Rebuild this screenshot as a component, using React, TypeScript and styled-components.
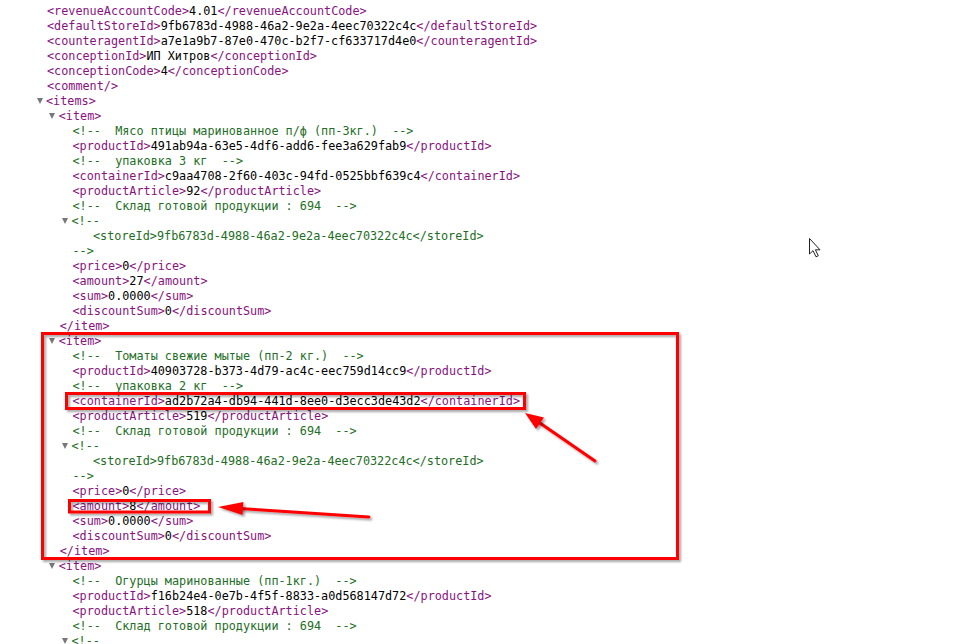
import React from "react";
import styled, { createGlobalStyle } from "styled-components";

const Global = createGlobalStyle`
  html, body { margin: 0; padding: 0; background: #fff; }
  body { width: 956px; height: 644px; overflow: hidden; }
`;

const INDENT = 12.75;

const Page = styled.div`
  position: relative;
  width: 956px;
  height: 644px;
  overflow: hidden;
  box-sizing: border-box;
  padding: 3.5px 0 0 47px;
  font-family: "DejaVu Sans Mono", "Liberation Mono", monospace;
  font-size: 11.8px;
  color: #000;
`;

const Line = styled.div`
  height: 15px;
  line-height: 15px;
  white-space: pre;
`;

const Children = styled.div`
  margin-left: ${INDENT}px;
`;

const CommentBody = styled.div`
  margin-left: 20.5px;
`;

const Tag = styled.span`
  color: #881280;
`;

const Comment = styled.span`
  color: #236e25;
`;

const Fold = styled.span`
  display: inline-block;
  width: 0;
  height: 0;
  margin-left: -10.5px;
  margin-right: 3.5px;
  border-left: 3.5px solid transparent;
  border-right: 3.5px solid transparent;
  border-top: 6px solid #777;
  vertical-align: 1px;
`;

const Overlay = styled.svg`
  position: absolute;
  left: 0;
  top: 0;
  pointer-events: none;
`;

type XNode =
  | { kind: "leaf"; tag: string; text: string }
  | { kind: "empty"; tag: string }
  | { kind: "comment"; text: string }
  | { kind: "mcomment"; lines: string[] }
  | { kind: "el"; tag: string; children: XNode[] };

const leaf = (tag: string, text: string): XNode => ({ kind: "leaf", tag, text });
const cm = (text: string): XNode => ({ kind: "comment", text });
const store = (id: string): XNode => ({
  kind: "mcomment",
  lines: [`<storeId>${id}</storeId>`],
});

const STORE = "9fb6783d-4988-46a2-9e2a-4eec70322c4c";

const item = (
  name: string,
  productId: string,
  pack: string | null,
  containerId: string | null,
  article: string,
  amount: string
): XNode => {
  const ch: XNode[] = [cm(`  ${name}  `), leaf("productId", productId)];
  if (pack) ch.push(cm(`  ${pack}  `));
  if (containerId) ch.push(leaf("containerId", containerId));
  ch.push(leaf("productArticle", article));
  ch.push(cm("  Склад готовой продукции : 694  "));
  ch.push(store(STORE));
  ch.push(leaf("price", "0"));
  ch.push(leaf("amount", amount));
  ch.push(leaf("sum", "0.0000"));
  ch.push(leaf("discountSum", "0"));
  return { kind: "el", tag: "item", children: ch };
};

const tree: XNode[] = [
  leaf("revenueAccountCode", "4.01"),
  leaf("defaultStoreId", STORE),
  leaf("counteragentId", "a7e1a9b7-87e0-470c-b2f7-cf633717d4e0"),
  leaf("conceptionId", "ИП Хитров"),
  leaf("conceptionCode", "4"),
  { kind: "empty", tag: "comment" },
  {
    kind: "el",
    tag: "items",
    children: [
      item(
        "Мясо птицы маринованное п/ф (пп-3кг.)",
        "491ab94a-63e5-4df6-add6-fee3a629fab9",
        "упаковка 3 кг",
        "c9aa4708-2f60-403c-94fd-0525bbf639c4",
        "92",
        "27"
      ),
      item(
        "Томаты свежие мытые (пп-2 кг.)",
        "40903728-b373-4d79-ac4c-eec759d14cc9",
        "упаковка 2 кг",
        "ad2b72a4-db94-441d-8ee0-d3ecc3de43d2",
        "519",
        "8"
      ),
      item(
        "Огурцы маринованные (пп-1кг.)",
        "f16b24e4-0e7b-4f5f-8833-a0d568147d72",
        null,
        null,
        "518",
        "0"
      ),
    ],
  },
];

const Node: React.FC<{ node: XNode }> = ({ node }) => {
  switch (node.kind) {
    case "leaf":
      return (
        <Line>
          <Tag>&lt;{node.tag}&gt;</Tag>
          {node.text}
          <Tag>&lt;/{node.tag}&gt;</Tag>
        </Line>
      );
    case "empty":
      return (
        <Line>
          <Tag>&lt;{node.tag}/&gt;</Tag>
        </Line>
      );
    case "comment":
      return (
        <Line>
          <Comment>&lt;!--{node.text}--&gt;</Comment>
        </Line>
      );
    case "mcomment":
      return (
        <div>
          <Line>
            <Fold />
            <Comment>&lt;!--</Comment>
          </Line>
          <CommentBody>
            {node.lines.map((l, i) => (
              <Line key={i}>
                <Comment>{l}</Comment>
              </Line>
            ))}
          </CommentBody>
          <Line>
            <Comment>--&gt;</Comment>
          </Line>
        </div>
      );
    case "el":
      return (
        <div>
          <Line>
            <Fold />
            <Tag>&lt;{node.tag}&gt;</Tag>
          </Line>
          <Children>
            {node.children.map((c, i) => (
              <Node key={i} node={c} />
            ))}
          </Children>
          <Line>
            <Tag>&lt;/{node.tag}&gt;</Tag>
          </Line>
        </div>
      );
  }
};

const Annotations: React.FC = () => (
  <Overlay width={956} height={644} viewBox="0 0 956 644">
    <defs>
      <filter id="sh" x="-10%" y="-10%" width="130%" height="130%">
        <feDropShadow dx="2" dy="2" stdDeviation="1.2" floodColor="#000" floodOpacity="0.35" />
      </filter>
    </defs>
    <g filter="url(#sh)" fill="none" stroke="#ff0000" strokeWidth={3}>
      <rect x={42.5} y={333.5} width={635} height={225} />
      <rect x={66.5} y={393.5} width={458} height={15} />
      <rect x={69.5} y={500.5} width={140} height={11.5} />
      <line x1={595} y1={461} x2={537} y2={421} strokeLinecap="round" />
      <line x1={369} y1={517} x2={240} y2={508.6} strokeLinecap="round" />
    </g>
    <g filter="url(#sh)" fill="#ff0000" stroke="none">
      <polygon points="525,413 544,417.5 536,429" />
      <polygon points="218,507 243.4,502 242.6,515" />
    </g>
    <path
      d="M809.5 238.5 L809.5 254 L813 250.7 L816 256.8 L818.3 255.8 L815.4 249.8 L820 249.8 Z"
      fill="#fff"
      stroke="#222"
      strokeWidth={1}
      strokeLinejoin="round"
    />
  </Overlay>
);

export default function App() {
  return (
    <>
      <Global />
      <Page>
        {tree.map((n, i) => (
          <Node key={i} node={n} />
        ))}
        <Annotations />
      </Page>
    </>
  );
}
